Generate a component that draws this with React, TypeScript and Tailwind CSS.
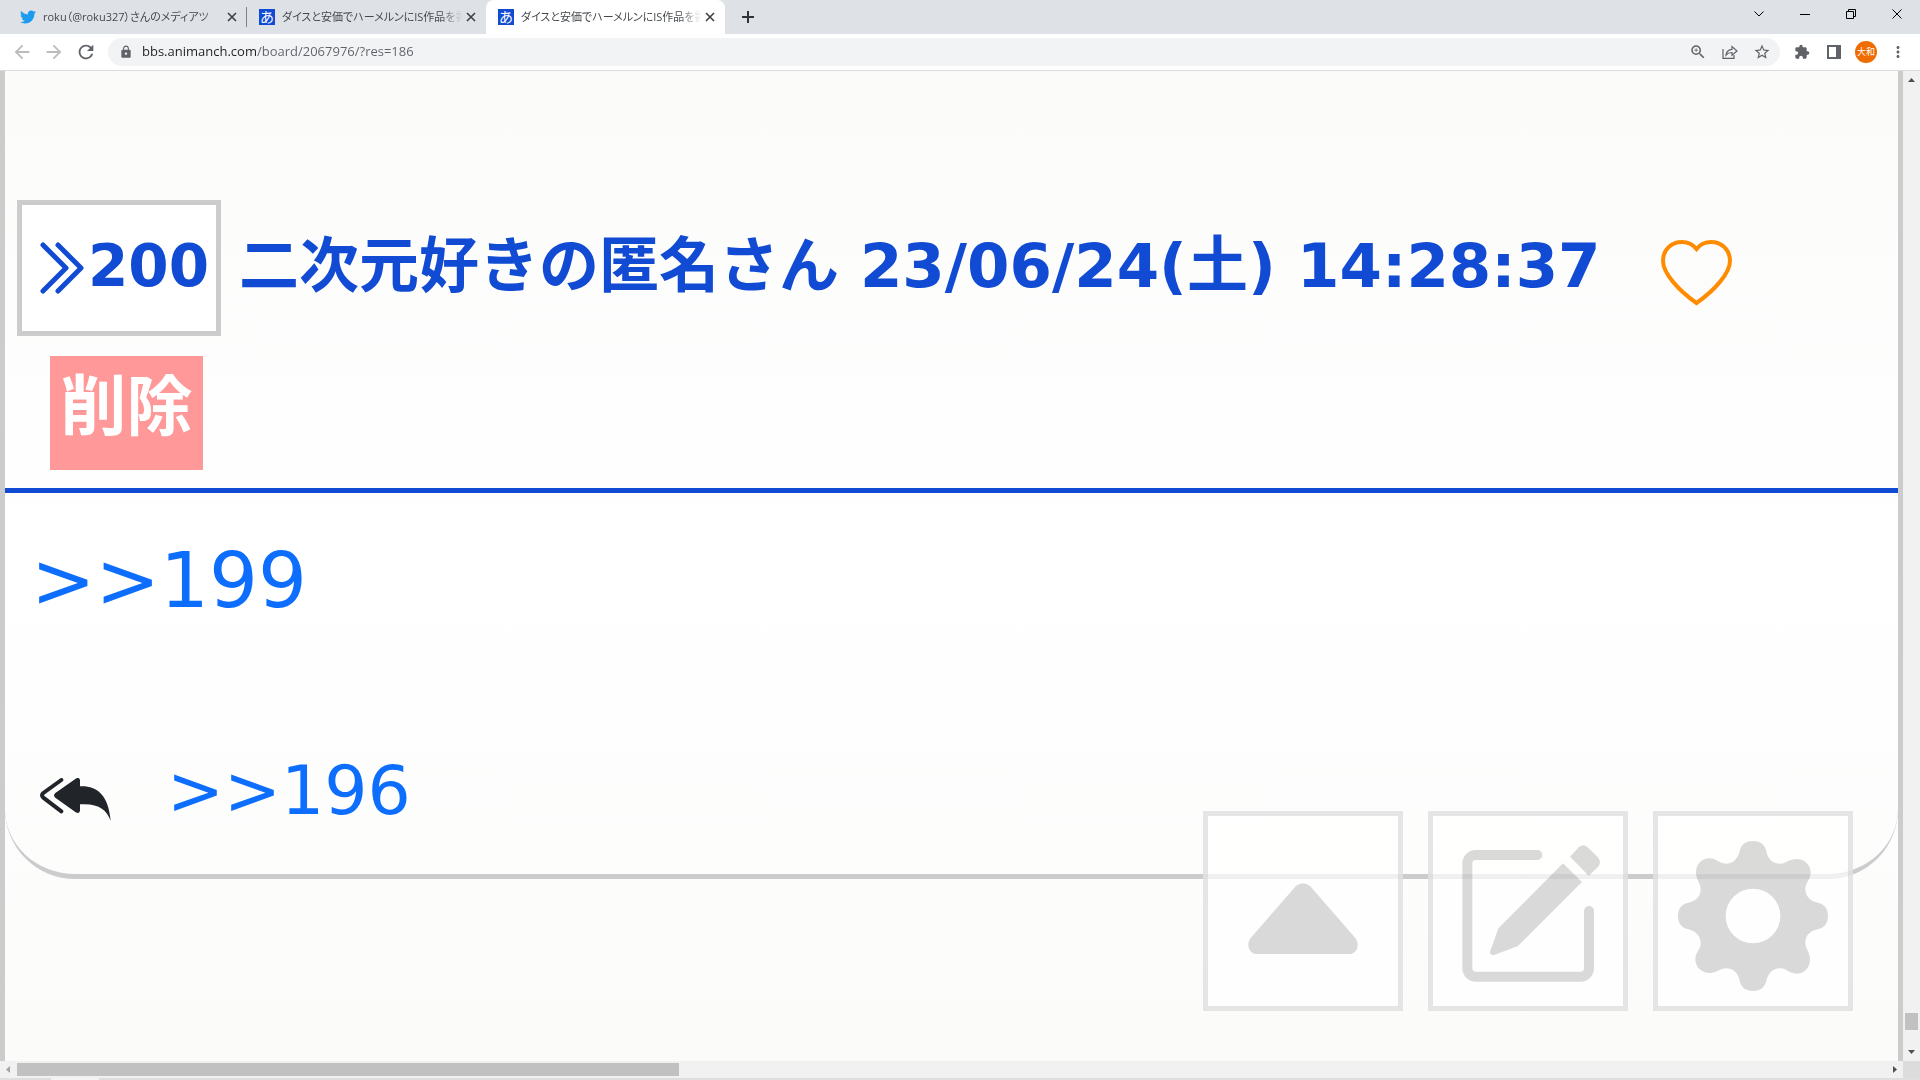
import type { ReactNode } from "react";
import { FaTwitter } from "react-icons/fa";
import {
  MdArrowBack,
  MdArrowForward,
  MdExtension,
  MdLock,
  MdMoreVert,
  MdRefresh,
  MdStarBorder,
  MdZoomIn,
} from "react-icons/md";

type Tab = {
  id: number;
  title: string;
  site: "twitter" | "animanch";
  active: boolean;
};

const tabs: Tab[] = [
  { id: 1, title: "roku（@roku327）さんのメディアツ", site: "twitter", active: false },
  { id: 2, title: "ダイスと安価でハーメルンにIS作品を書", site: "animanch", active: false },
  { id: 3, title: "ダイスと安価でハーメルンにIS作品を書", site: "animanch", active: true },
];

function Favicon({ site }: { site: Tab["site"] }) {
  if (site === "twitter") {
    return <FaTwitter className="size-4 shrink-0 text-[#1d9bf0]" />;
  }
  return (
    <span className="flex size-4 shrink-0 items-center justify-center bg-[#114bd3] text-sm leading-4 text-white">
      あ
    </span>
  );
}

function TabStrip() {
  return (
    <div className="flex h-[34px] bg-[#dee1e6]">
      <div className="flex pl-2">
        {tabs.map((tab) => (
          <div
            key={tab.id}
            className={`flex w-[239px] items-center pr-[10px] pl-3 ${
              tab.active ? "rounded-t-lg bg-white" : ""
            }`}
          >
            <Favicon site={tab.site} />
            <span className="ml-[7px] min-w-0 flex-1 overflow-hidden text-[11px] whitespace-nowrap text-[#45494d] [font-feature-settings:'palt'] [mask-image:linear-gradient(90deg,#000_88%,transparent)]">
              {tab.title}
            </span>
            <button aria-label="タブを閉じる" className="ml-1 text-[#3c4043]">
              <svg viewBox="0 0 10 10" className="size-[10px]" stroke="currentColor" strokeWidth="1.6">
                <path d="M1 1L9 9M9 1L1 9" />
              </svg>
            </button>
            {tab.id === 1 && <span className="-mr-[10px] ml-[9px] h-5 w-px bg-[#808387]" />}
          </div>
        ))}
      </div>
      <button aria-label="新しいタブ" className="ml-[17px] text-[#303236]">
        <svg viewBox="0 0 12 12" className="size-3" stroke="currentColor" strokeWidth="2">
          <path d="M6 0V12M0 6H12" />
        </svg>
      </button>
      <div className="ml-auto flex h-7 text-black">
        <WindowButton label="タブを検索">
          <path d="M0.5 2.5L5 7L9.5 2.5" />
        </WindowButton>
        <WindowButton label="最小化">
          <path d="M0 5.5H10" />
        </WindowButton>
        <WindowButton label="元に戻す">
          <path d="M0.5 2.5H7.5V9.5H0.5ZM2.5 2.5V0.5H9.5V7.5H7.5" />
        </WindowButton>
        <WindowButton label="閉じる">
          <path d="M0.5 0.5L9.5 9.5M9.5 0.5L0.5 9.5" />
        </WindowButton>
      </div>
    </div>
  );
}

function WindowButton({ label, children }: { label: string; children: ReactNode }) {
  return (
    <button aria-label={label} className="flex w-[46px] items-center justify-center">
      <svg viewBox="0 0 10 10" className="size-[10px]" fill="none" stroke="currentColor">
        {children}
      </svg>
    </button>
  );
}

function ToolButton({ label, children }: { label: string; children: ReactNode }) {
  return (
    <button aria-label={label} className="flex size-8 shrink-0 items-center justify-center">
      {children}
    </button>
  );
}

function Toolbar() {
  return (
    <div className="flex h-[37px] items-center border-b border-[#dadce0] bg-white pr-[6px] pl-[6px] text-[#5f6368]">
      <ToolButton label="戻る">
        <MdArrowBack className="size-[22px] text-[#babcbe]" />
      </ToolButton>
      <ToolButton label="進む">
        <MdArrowForward className="size-[22px] text-[#babcbe]" />
      </ToolButton>
      <ToolButton label="再読み込み">
        <MdRefresh className="size-[22px]" />
      </ToolButton>
      <div className="ml-[6px] flex h-7 flex-1 items-center rounded-full bg-[#f1f3f4] pr-[2px] pl-[11px]">
        <MdLock className="size-[14px] shrink-0" />
        <input
          aria-label="アドレスバー"
          readOnly
          value="bbs.animanch.com/board/2067976/?res=186"
          className="ml-[9px] min-w-0 flex-1 bg-[linear-gradient(90deg,#202124_115px,#5f6368_115px)] bg-clip-text font-['Open_Sans',sans-serif] text-[13px] text-transparent outline-none"
        />
        <ToolButton label="ズーム">
          <MdZoomIn className="size-[18px]" />
        </ToolButton>
        <ToolButton label="共有">
          <svg viewBox="0 0 16 16" className="size-4" fill="none" stroke="currentColor" strokeWidth="1.2">
            <path d="M1 5V14.3H12V11" />
            <path d="M4 11C4.500 7.500 6.500 5.500 10 5.300V2.500L15 7L10 11.300V8.500C7.500 8.500 5.500 9.200 4 11Z" />
          </svg>
        </ToolButton>
        <ToolButton label="ブックマーク">
          <MdStarBorder className="size-[18px]" />
        </ToolButton>
      </div>
      <div className="ml-[6px] flex items-center">
        <ToolButton label="拡張機能">
          <MdExtension className="size-4" />
        </ToolButton>
        <ToolButton label="サイドパネル">
          <svg viewBox="0 0 14 14" className="size-[14px]">
            <path fill="currentColor" fillRule="evenodd" d="M0 0H14V14H0ZM2 2V12H9V2Z" />
          </svg>
        </ToolButton>
        <ToolButton label="プロフィール">
          <span className="flex size-[22px] items-center justify-center rounded-full bg-[#ef6c00] text-[9px] text-white">
            大和
          </span>
        </ToolButton>
        <ToolButton label="メニュー">
          <MdMoreVert className="size-[18px]" />
        </ToolButton>
      </div>
    </div>
  );
}

function DoubleChevron() {
  return (
    <svg
      viewBox="0 0 44 52"
      className="h-[52px] w-[44px] shrink-0"
      fill="none"
      stroke="currentColor"
      strokeWidth="5"
      strokeLinecap="round"
      strokeLinejoin="round"
    >
      <path d="M3 3L26 26L3 49" />
      <path d="M18 3L41 26L18 49" />
    </svg>
  );
}

function ReplyAllIcon() {
  return (
    <svg viewBox="0 0 213 129" className="h-[43px] w-[71px] shrink-0 text-[#212529]">
      <path
        d="M64 6L10 45Q2 52 10 59L64 100"
        fill="none"
        stroke="currentColor"
        strokeWidth="12"
        strokeLinecap="round"
      />
      <path
        d="M107 2Q118 -4 120 6V25C165 22 205 45 212 128C200 95 175 75 120 79V98Q118 108 107 103L46 59Q38 52 46 45Z"
        fill="currentColor"
      />
    </svg>
  );
}

function HeartIcon() {
  return (
    <svg viewBox="0 0 71 66" className="h-[66px] w-[71px]" fill="none" stroke="#ff8c00" strokeWidth="4">
      <path d="M35.500 9C32 4.500 27 2 21 2C10 2 2 10 2 21C2 33 17 50 35.500 63C54 50 69 33 69 21C69 10 61 2 50 2C44 2 39 4.500 35.500 9Z" />
    </svg>
  );
}

function Post() {
  return (
    <article className="rounded-b-[70px] border-b-[5px] border-[#ccc]">
      <header className="border-b-[5px] border-[#114bd3] px-3 pt-[129px] pb-[18px] font-bold text-[#114bd3]">
        <div className="flex items-start">
          <a
            href="#res200"
            className="flex h-[136px] w-[204px] shrink-0 items-center gap-1 border-[5px] border-[#ccc] bg-white pl-[18px] text-[58px] leading-[122px]"
          >
            <DoubleChevron />
            <span className="pb-1">200</span>
          </a>
          <h2 className="ml-[18px] pt-[5px] text-[60px] leading-[122px] whitespace-nowrap">
            二次元好きの匿名さん <span className="text-[61px]">23/06/24(土) 14:28:37</span>
          </h2>
          <button aria-label="いいね" className="mt-10 ml-[60px]">
            <HeartIcon />
          </button>
        </div>
        <button className="mt-5 ml-[33px] flex h-[114px] w-[153px] justify-center bg-[#ff9999] text-[66px] leading-[104px] font-bold text-white">
          削除
        </button>
      </header>
      <div className="px-[26px] pt-[30px] pb-[33px]">
        <p className="text-[77px] leading-[116px] text-[#0d6efd]">
          <a href="#res199">&gt;&gt;199</a>
        </p>
        <div className="mt-[102px] flex items-end gap-14 pl-[9px]">
          <div className="pb-5">
            <ReplyAllIcon />
          </div>
          <a href="#res196" className="text-[68px] leading-[100px] text-[#0d6efd]">
            &gt;&gt;196
          </a>
        </div>
      </div>
    </article>
  );
}

function FloatingButton({ label, children }: { label: string; children: ReactNode }) {
  return (
    <button aria-label={label} className="size-[200px] border-[5px] border-[#ccc]/50 bg-white/70">
      <svg viewBox="0 0 570 570" className="size-full text-black opacity-[0.14]">
        {children}
      </svg>
    </button>
  );
}

// one quarter of the cog, repeated around its centre
const COG_QUARTER =
  "M0 -225C22 -225 35 -215 40 -195C44 -172 58 -157 81 -157C98 -157 108 -171 131 -171C155 -171 173 -153 173 -130C173 -110 157 -100 157 -82C157 -60 172 -45 195 -40C215 -35 225 -22 225 0H82A82 82 0 0 0 0 -82Z";

function FloatingButtons() {
  return (
    <div className="absolute right-[50px] bottom-[50px] flex gap-[25px]">
      <FloatingButton label="上へ">
        <path
          transform="translate(120 201)"
          fill="currentColor"
          d="M143 10Q165 -9 187 10L322 165C338 187 325 213 303 213H27C5 213 -8 187 8 165Z"
        />
      </FloatingButton>
      <FloatingButton label="書き込む">
        <path
          d="M313 117H128A25 25 0 0 0 103 142V457A25 25 0 0 0 128 482H443A25 25 0 0 0 468 457V285"
          fill="none"
          stroke="currentColor"
          strokeWidth="30"
          strokeLinecap="round"
        />
        <path
          d="M390 142L447 198L254 391L183 417Q171 419 171 407L196 337ZM411 122L438 93Q450 82 463 93L494 123Q507 138 496 152L467 179Z"
          fill="currentColor"
        />
      </FloatingButton>
      <FloatingButton label="設定">
        <g fill="currentColor" transform="translate(285 300)">
          {[0, 90, 180, 270].map((angle) => (
            <path key={angle} d={COG_QUARTER} transform={`rotate(${angle})`} />
          ))}
        </g>
      </FloatingButton>
    </div>
  );
}

function VerticalScrollbar() {
  return (
    <div className="flex w-[17px] shrink-0 flex-col items-center justify-between bg-[#f1f1f1] text-[#505050]">
      <svg viewBox="0 0 17 17" className="size-[17px]">
        <path fill="currentColor" d="M5 11H12L8.500 7Z" />
      </svg>
      <div className="mt-auto mb-[14px] h-[17px] w-[13px] bg-[#c1c1c1]" />
      <svg viewBox="0 0 17 17" className="size-[17px]">
        <path fill="currentColor" d="M5 6H12L8.500 10Z" />
      </svg>
    </div>
  );
}

function HorizontalScrollbar() {
  return (
    <div className="flex h-[17px] shrink-0 items-center bg-[#f1f1f1] text-[#505050]">
      <svg viewBox="0 0 17 17" className="size-[17px] text-[#a3a3a3]">
        <path fill="currentColor" d="M10 5V12L6 8.500Z" />
      </svg>
      <div className="h-[13px] flex-1">
        <div className="h-full w-[35.400%] bg-[#c1c1c1]" />
      </div>
      <svg viewBox="0 0 17 17" className="size-[17px]">
        <path fill="currentColor" d="M7 5V12L11 8.500Z" />
      </svg>
      <div className="size-[17px] bg-[#dcdcdc]" />
    </div>
  );
}

export default function App() {
  return (
    <div className="flex h-screen flex-col overflow-hidden bg-white font-['DejaVu_Sans','Noto_Sans_CJK_JP',sans-serif]">
      <div className="font-['Open_Sans','Noto_Sans_CJK_JP',sans-serif]">
        <TabStrip />
        <Toolbar />
      </div>
      <div className="flex min-h-0 flex-1">
        <main className="relative min-w-0 flex-1 overflow-hidden border-x-[5px] border-[#ccc] bg-linear-to-b from-[#fbfbfa] via-white to-[#fbfbfa]">
          <Post />
        </main>
        <VerticalScrollbar />
      </div>
      <div className="relative">
        <HorizontalScrollbar />
        <div className="absolute right-[17px] bottom-full">
          <FloatingButtons />
        </div>
      </div>
      <div className="h-[2px] shrink-0 bg-[#dedede] pl-[51px]">
        <div className="h-full w-12 bg-[#f3f3f3]" />
      </div>
    </div>
  );
}
